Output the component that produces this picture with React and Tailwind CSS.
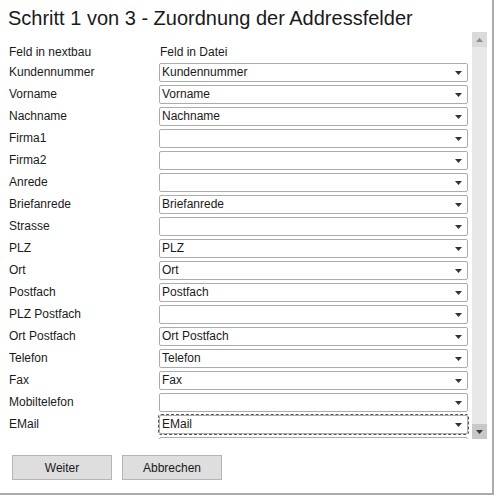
import React from "react";

const rows = [
  ["Kundennummer", "Kundennummer"],
  ["Vorname", "Vorname"],
  ["Nachname", "Nachname"],
  ["Firma1", ""],
  ["Firma2", ""],
  ["Anrede", ""],
  ["Briefanrede", "Briefanrede"],
  ["Strasse", ""],
  ["PLZ", "PLZ"],
  ["Ort", "Ort"],
  ["Postfach", "Postfach"],
  ["PLZ Postfach", ""],
  ["Ort Postfach", "Ort Postfach"],
  ["Telefon", "Telefon"],
  ["Fax", "Fax"],
  ["Mobiltelefon", ""],
  ["EMail", "EMail"],
  ["", ""],
];

function Arrow({ color = "#333" }) {
  return (
    <svg width="7" height="4" viewBox="0 0 7 4" className="block">
      <polygon points="0,0 7,0 3.5,4" fill={color} />
    </svg>
  );
}

function Select({ value, focused }) {
  return (
    <div
      className={
        "w-[309px] h-[19px] bg-white border border-[#acacac] rounded-[2px] flex items-center justify-between pl-[2px] pr-[5px] " +
        (focused ? "outline-1 outline-dashed outline-[#555]" : "")
      }
    >
      <span className="leading-[17px]">{value}</span>
      <Arrow />
    </div>
  );
}

export default function App() {
  return (
    <div
      className="w-[494px] h-[495px] border-r-2 border-b-2 border-[#ababab] bg-white text-[#1a1a1a] flex flex-col"
      style={{ fontFamily: '"Liberation Sans", Arial, sans-serif' }}
    >
      <div className="mt-[6px] mb-[2px] pl-[8px] h-[24px] text-[20px] leading-[24px]">
        Schritt 1 von 3 - Zuordnung der Addressfelder
      </div>
      <div className="flex h-[407px]">
        <div className="w-[472px] overflow-hidden pt-[9px] text-[12px]">
          <div className="flex h-[21px] items-center">
            <div className="w-[159px] pl-[9px]">Feld in nextbau</div>
            <div className="pl-[1px]">Feld in Datei</div>
          </div>
          {rows.map(([label, value], i) => (
            <div key={i} className="flex h-[22px]">
              <div className="w-[159px] pl-[9px] h-[22px] leading-[21px]">{label}</div>
              <div className="pt-[1px]">
                <Select value={value} focused={label === "EMail"} />
              </div>
            </div>
          ))}
        </div>
        <div className="w-[15px] flex flex-col bg-[#e6e6e6]">
          <div className="h-[15px] bg-[#dadada] flex items-center justify-center">
            <svg width="7" height="4" viewBox="0 0 7 4" className="block">
              <polygon points="0,4 7,4 3.5,0" fill="#8a8a8a" />
            </svg>
          </div>
          <div className="flex-1 bg-[#e8e8e8]" />
          <div className="h-[15px] bg-[#c8c8c8] flex items-center justify-center">
            <Arrow color="#3a3a3a" />
          </div>
        </div>
      </div>
      <div className="mt-[16px] ml-[12px] flex gap-[10px] text-[12px]">
        <button className="w-[100px] h-[25px] bg-[#dedede] border border-[#b5b5b5] text-[#1a1a1a]">
          Weiter
        </button>
        <button className="w-[100px] h-[25px] bg-[#dedede] border border-[#b5b5b5] text-[#1a1a1a]">
          Abbrechen
        </button>
      </div>
    </div>
  );
}
